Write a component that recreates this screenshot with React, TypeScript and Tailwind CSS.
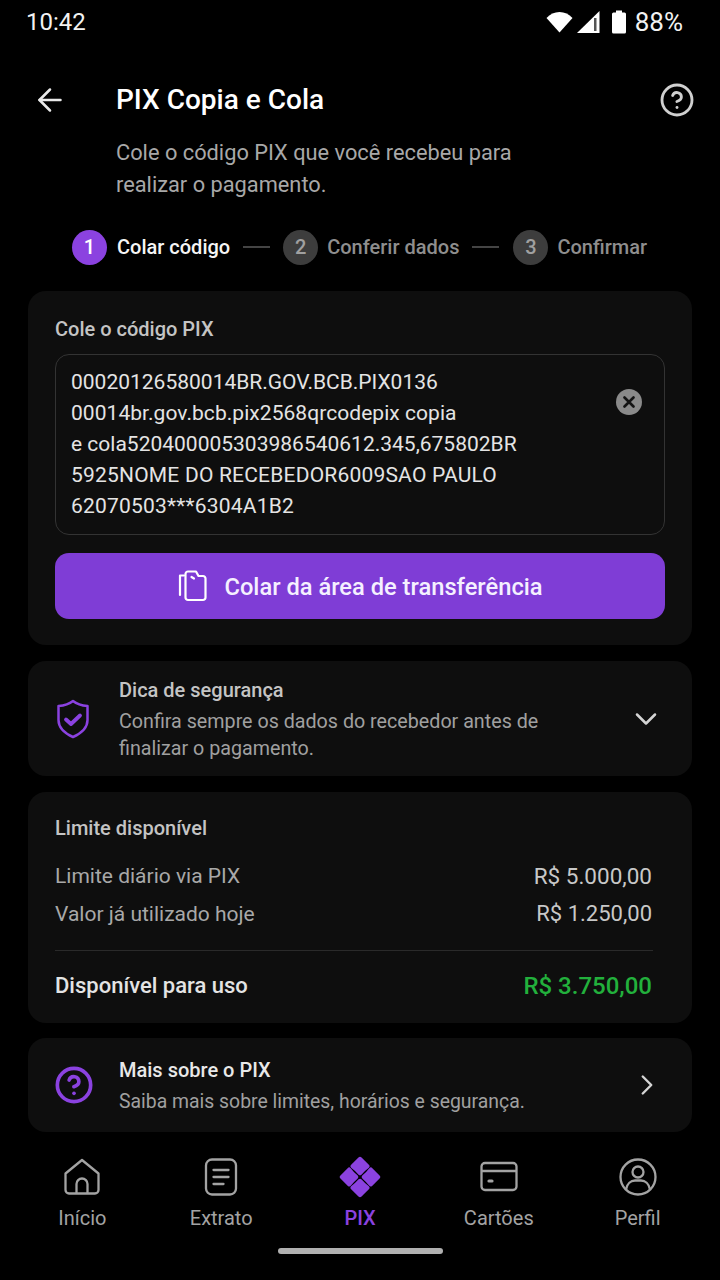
import { ArrowLeft, ChevronDown, ChevronRight, CircleHelp } from "lucide-react";

function Wifi() {
  return (
    <svg width="27" height="22" viewBox="0 0 27 22">
      <path d="M.5 7C4 3.300 8.500 1 13.500 1s9.500 2.300 13 6L13.500 21.500z" fill="#fff" />
    </svg>
  );
}

function Signal() {
  return (
    <svg width="24" height="24" viewBox="0 0 24 24">
      <path d="M1 23 23.500 1v22z" fill="#fff" />
      <rect x="18" y="8" width="2.500" height="13" fill="#555" />
    </svg>
  );
}

function Battery() {
  return (
    <svg width="16" height="24" viewBox="0 0 16 24">
      <path d="M5 .5h6V2.500h2.500A1.500 1.500 0 0 1 15 4v18a1.500 1.500 0 0 1-1.500 1.500h-11A1.500 1.500 0 0 1 1 22V4a1.500 1.500 0 0 1 1.500-1.500H5z" fill="#fff" />
    </svg>
  );
}

function PasteIcon() {
  return (
    <svg width="30" height="32" viewBox="0 0 30 32" fill="none" stroke="#fff" strokeWidth="2.200" strokeLinecap="round" strokeLinejoin="round">
      <path d="M7 5.500H3V25" />
      <path d="M8.500 4a2.500 2.500 0 0 1 2.500-2.500h8L21.500 6h4.500a2.500 2.500 0 0 1 2.500 2.500V27.500A2.500 2.500 0 0 1 26 30H11a2.500 2.500 0 0 1-2.500-2.500z" />
      <path d="M14.500 7l2.500 1.500" />
    </svg>
  );
}

function ShieldIcon() {
  return (
    <svg width="36" height="40" viewBox="0 0 36 40" fill="none" stroke="#8b42e0" strokeLinecap="round" strokeLinejoin="round">
      <path d="M18 2c3.500 2.800 8.500 4.500 14.500 5V21c0 8-5.500 13-14.500 17C9 34 3.500 29 3.500 21V7C9.500 6.500 14.500 4.800 18 2z" strokeWidth="2.500" />
      <path d="M11 20.500l5 4.500 9-8.500" strokeWidth="3.800" />
    </svg>
  );
}

function HomeIcon() {
  return (
    <svg width="38" height="38" viewBox="0 0 38 38" fill="none" stroke="#a3a3a3" strokeWidth="2.300" strokeLinejoin="round">
      <path d="M2.500 15.500 19 2l16.500 13.500V32a3.500 3.500 0 0 1-3.500 3.500H6A3.500 3.500 0 0 1 2.500 32z" />
      <path d="M13.500 35.500V26a5.500 5.500 0 0 1 11 0v9.500" />
    </svg>
  );
}

function ReceiptIcon() {
  return (
    <svg width="36" height="38" viewBox="0 0 36 38" fill="none" stroke="#a3a3a3" strokeWidth="2.300" strokeLinecap="round">
      <rect x="3" y="1.500" width="30" height="35" rx="6" />
      <path d="M10.500 12h15M10.500 19h15M10.500 26h10" />
    </svg>
  );
}

function PixIcon() {
  return (
    <svg width="42" height="42" viewBox="0 0 42 42" fill="#8b42e0" stroke="#8b42e0" strokeWidth="4.400" strokeLinejoin="round">
      <path d="M21 3 28.300 10.200Q24.500 13 21 17 17.500 13 13.700 10.200z" />
      <path d="M21 39 28.300 31.800Q24.500 29 21 25 17.500 29 13.700 31.800z" />
      <path d="M3 21 10.200 13.700Q13 17.500 17 21 13 24.500 10.200 28.300z" />
      <path d="M39 21 31.800 13.700Q29 17.500 25 21 29 24.500 31.800 28.300z" />
    </svg>
  );
}

function CardIcon() {
  return (
    <svg width="38" height="38" viewBox="0 0 38 38" fill="none" stroke="#a3a3a3" strokeWidth="2.300">
      <rect x="1.500" y="5" width="35" height="27" rx="3.500" />
      <path d="M1.500 13h35" />
      <path d="M9 23h3" strokeWidth="3.200" strokeLinecap="round" />
    </svg>
  );
}

function ProfileIcon() {
  return (
    <svg width="38" height="38" viewBox="0 0 38 38" fill="none" stroke="#a3a3a3" strokeWidth="2.300">
      <circle cx="19" cy="19" r="17.500" />
      <circle cx="19" cy="14" r="5.500" />
      <path d="M7 31.500c1-6 5-9 9-9h6c4 0 8 3 9 9" />
    </svg>
  );
}

const tabs = [
  { label: "Início", icon: <HomeIcon /> },
  { label: "Extrato", icon: <ReceiptIcon /> },
  { label: "PIX", icon: <PixIcon />, active: true },
  { label: "Cartões", icon: <CardIcon /> },
  { label: "Perfil", icon: <ProfileIcon /> },
];

export default function App() {
  return (
    <div className="w-[720px] h-[1280px] bg-black text-white overflow-hidden flex flex-col font-['Roboto',sans-serif]">
      {/* status bar */}
      <div className="h-[44px] pl-[26px] pr-[37px] flex items-center justify-between text-[24px] text-[#f2f2f2]">
        <span>10:42</span>
        <div className="flex items-center">
          <Wifi />
          <div className="ml-[3px]"><Signal /></div>
          <div className="ml-[11px]"><Battery /></div>
          <span className="ml-[8px] text-[26px]">88%</span>
        </div>
      </div>

      {/* header */}
      <div className="mt-[32px] pl-[32px] pr-[25px] flex items-center h-[48px]">
        <ArrowLeft size={36} strokeWidth={1.700} className="text-[#e8e8e8]" />
        <h1 className="ml-[48px] text-[28px] font-medium flex-1">PIX Copia e Cola</h1>
        <CircleHelp size={36} strokeWidth={1.900} className="text-[#d0d0d0]" />
      </div>
      <p className="mt-[13px] ml-[116px] w-[440px] text-[21.800px] leading-[32px] text-[#a8a8a8]">
        Cole o código PIX que você recebeu para realizar o pagamento.
      </p>

      {/* stepper */}
      <div className="mt-[28px] ml-[72px] flex items-center h-[36px] text-[20px] font-medium">
        <div className="w-[35px] h-[35px] rounded-full bg-[#8b42e0] flex items-center justify-center">1</div>
        <span className="ml-[10px] text-[#f5f5f5]">Colar código</span>
        <div className="mx-[13px] w-[27px] h-[2px] bg-[#444]" />
        <div className="w-[35px] h-[35px] rounded-full bg-[#3d3d3d] flex items-center justify-center text-[#a0a0a0]">2</div>
        <span className="ml-[9px] text-[#8e8e8e]">Conferir dados</span>
        <div className="ml-[13px] mr-[14px] w-[27px] h-[2px] bg-[#444]" />
        <div className="w-[35px] h-[35px] rounded-full bg-[#3d3d3d] flex items-center justify-center text-[#a0a0a0]">3</div>
        <span className="ml-[9px] text-[#8e8e8e]">Confirmar</span>
      </div>

      {/* cards */}
      <div className="mt-[26px] mx-[28px] flex flex-col gap-[16px]">
        <section className="h-[354px] rounded-[18px] bg-[#0e0e0e] px-[27px] pt-[25px]">
          <h2 className="text-[20px] leading-[26px] font-medium text-[#c4c4c4]">Cole o código PIX</h2>
          <div className="mt-[12px] h-[181px] rounded-[14px] border border-[#333] pl-[15px] pr-[22px] pt-[12px] flex justify-between">
            <div className="text-[21px] leading-[31px] text-[#e4e4e4] whitespace-pre">
              <p>00020126580014BR.GOV.BCB.PIX0136</p>
              <p className="tracking-[0.050px]">00014br.gov.bcb.pix2568qrcodepix copia</p>
              <p>e cola520400005303986540612.345,675802BR</p>
              <p className="tracking-[0.200px]">5925NOME DO RECEBEDOR6009SAO PAULO</p>
              <p className="tracking-[0.200px]">62070503***6304A1B2</p>
            </div>
            <div className="mt-[22px] w-[26px] h-[26px] rounded-full bg-[#8a8a8a] flex items-center justify-center">
              <svg width="12" height="12" viewBox="0 0 12 12" stroke="#141414" strokeWidth="2.600" strokeLinecap="round">
                <path d="M1.500 1.500l9 9M10.500 1.500l-9 9" />
              </svg>
            </div>
          </div>
          <button className="mt-[18px] w-full h-[66px] rounded-[14px] bg-[#7f3dd6] flex items-center justify-center gap-[17px] text-[23.700px] font-medium text-[#f5f0ff]">
            <PasteIcon />
            <span className="mt-[3px]">Colar da área de transferência</span>
          </button>
        </section>

        <section className="h-[115px] rounded-[18px] bg-[#0e0e0e] pl-[27px] pr-[28px] flex items-center">
          <ShieldIcon />
          <div className="ml-[28px] flex-1">
            <h3 className="text-[20px] leading-[28px] font-medium text-[#c4c4c4]">Dica de segurança</h3>
            <p className="mt-[4px] text-[19.700px] leading-[27px] text-[#a0a0a0] w-[440px]">
              Confira sempre os dados do recebedor antes de finalizar o pagamento.
            </p>
          </div>
          <ChevronDown size={36} strokeWidth={1.700} className="text-[#d4d4d4]" />
        </section>

        <section className="h-[231px] rounded-[18px] bg-[#0e0e0e] pl-[27px] pr-[39px] pt-[22px]">
          <h3 className="text-[20px] leading-[28px] font-medium text-[#c4c4c4]">Limite disponível</h3>
          <div className="mt-[19px] flex justify-between text-[21px] leading-[30px] text-[#a8a8a8]">
            <span>Limite diário via PIX</span>
            <span className="mr-px text-[22.500px] text-[#c8c8c8]">R$ 5.000,00</span>
          </div>
          <div className="mt-[8px] flex justify-between text-[21px] leading-[30px] text-[#a8a8a8]">
            <span>Valor já utilizado hoje</span>
            <span className="mr-px text-[22px] text-[#c8c8c8]">R$ 1.250,00</span>
          </div>
          <div className="mt-[21px] h-px bg-[#2a2a2a]" />
          <div className="mt-[20px] flex justify-between text-[22px] leading-[30px] font-medium">
            <span className="text-[#e4e4e4]">Disponível para uso</span>
            <span className="mr-px text-[24px] text-[#22b03c]">R$ 3.750,00</span>
          </div>
        </section>

        <section className="-mt-px h-[94px] rounded-[18px] bg-[#0e0e0e] pl-[26px] pr-[28px] flex items-center">
          <CircleHelp size={40} strokeWidth={2.200} className="text-[#8b42e0]" />
          <div className="ml-[25px] pt-[2px] flex-1">
            <h3 className="text-[20px] leading-[30px] font-medium text-[#e8e8e8]">Mais sobre o PIX</h3>
            <p className="mt-[2px] text-[19.400px] leading-[30px] text-[#a0a0a0]">Saiba mais sobre limites, horários e segurança.</p>
          </div>
          <ChevronRight size={34} strokeWidth={1.700} className="text-[#d4d4d4]" />
        </section>
      </div>

      {/* bottom nav */}
      <nav className="mt-[23px] px-[13px] grid grid-cols-5">
        {tabs.map((tab) => (
          <div key={tab.label} className="flex flex-col items-center">
            <div className="h-[44px] flex items-center justify-center">{tab.icon}</div>
            <span className={`mt-[6px] text-[20px] leading-[26px] ${tab.active ? "text-[#8b42e0] font-medium" : "text-[#a3a3a3]"}`}>
              {tab.label}
            </span>
          </div>
        ))}
      </nav>
      <div className="mt-[17px] mx-auto w-[165px] h-[6px] rounded-full bg-[#b0b0b0]" />
    </div>
  );
}
